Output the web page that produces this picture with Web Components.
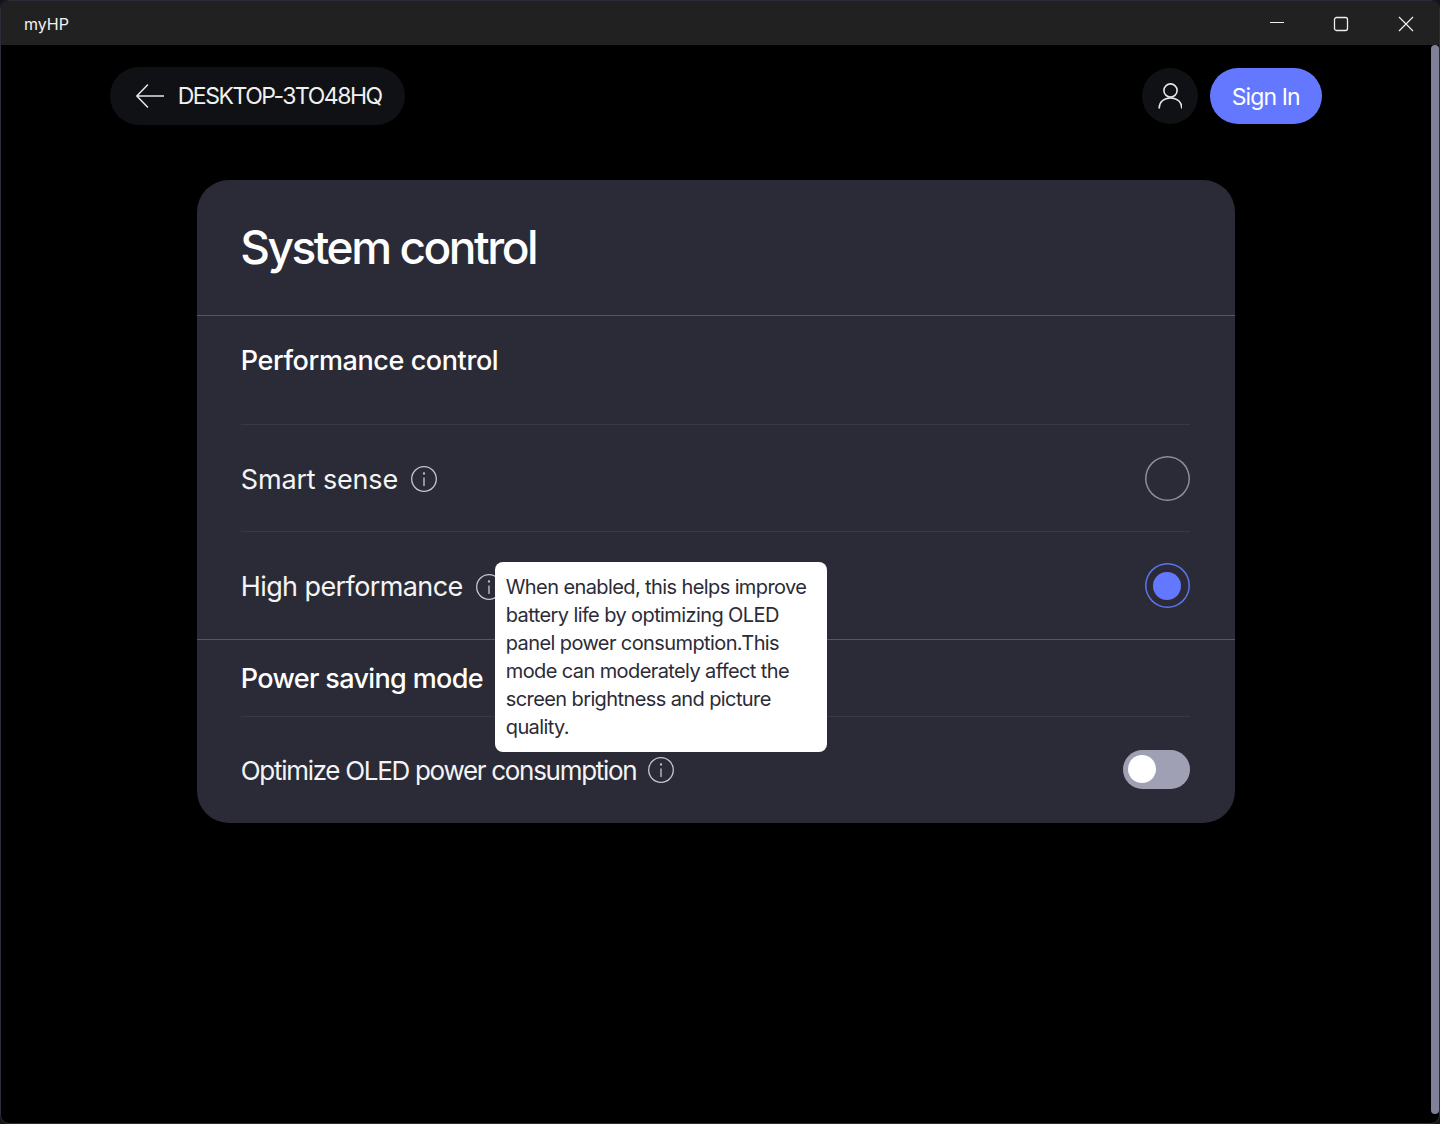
<!DOCTYPE html>
<html lang="en">
<head>
<meta charset="utf-8">
<title>myHP</title>
<style>
  html, body { margin: 0; height: 100%; background: #14141c; }
  body { font-family: Inter, "Liberation Sans", sans-serif; color: #fff; }
</style>
</head>
<body>
<hp-window>
  <hp-titlebar slot="title" label="myHP"></hp-titlebar>
  <hp-toolbar label="DESKTOP-3TO48HQ"></hp-toolbar>
  <hp-card heading="System control">
    <hp-section heading="Performance control" style="--track:-0.4px">
      <hp-option label="Smart sense" style="--track:-0.17px"><hp-radio slot="control"></hp-radio></hp-option>
      <hp-option label="High performance" style="--track:-0.6px">
        <hp-tooltip slot="extra">When enabled, this helps improve<br>battery life by optimizing OLED<br>panel power consumption.This<br>mode can moderately affect the<br>screen brightness and picture<br>quality.</hp-tooltip>
        <hp-radio slot="control" checked></hp-radio>
      </hp-option>
    </hp-section>
    <hp-section heading="Power saving mode" compact style="--track:-0.65px">
      <hp-option label="Optimize OLED power consumption" last style="--track:-1.3px"><hp-toggle slot="control"></hp-toggle></hp-option>
    </hp-section>
  </hp-card>
</hp-window>

<script>
class HpWindow extends HTMLElement {
  constructor() {
    super();
    this.attachShadow({ mode: 'open' });
    this.shadowRoot.innerHTML = `
      <style>
        :host {
          display: flex;
          flex-direction: column;
          box-sizing: border-box;
          height: 1124px;
          border: 1px solid #2c2c36;
          border-radius: 9px;
          background: #000;
          overflow: hidden;
        }
        .body { flex: 1; display: flex; min-height: 0; }
        .content { flex: 1; min-width: 0; display: flex; flex-direction: column; align-items: center; }
        .scrollbar {
          width: 8.5px;
          margin-bottom: 9px;
          background: #80809a;
          border-radius: 4px;
        }
      </style>
      <slot name="title"></slot>
      <div class="body">
        <div class="content"><slot></slot></div>
        <div class="scrollbar"></div>
      </div>
    `;
  }
}

class HpTitlebar extends HTMLElement {
  constructor() {
    super();
    this.attachShadow({ mode: 'open' });
    this.shadowRoot.innerHTML = `
      <style>
        :host {
          display: flex;
          align-items: center;
          justify-content: space-between;
          height: 44px;
          padding-left: 23px;
          padding-right: 1px;
          background: #212121;
          font-size: 16px;
          color: #f2f2f2;
        }
        .label { padding-top: 2px; }
        .controls { display: flex; height: 100%; }
        .controls span { width: 64.5px; display: flex; align-items: center; justify-content: center; padding-top: 1px; box-sizing: border-box; }
        svg { display: block; stroke: #eee; fill: none; }
      </style>
      <span class="label"></span>
      <div class="controls">
        <span><svg width="16" height="16" viewBox="0 0 16 16" stroke-width="1.2"><path d="M1 6.5h14"/></svg></span>
        <span><svg width="16" height="16" viewBox="0 0 16 16" stroke-width="1.3"><rect x="1.5" y="1.5" width="13" height="13" rx="2"/></svg></span>
        <span><svg width="16" height="16" viewBox="0 0 16 16" stroke-width="1.2"><path d="M1 1l14 14M15 1L1 15"/></svg></span>
      </div>
    `;
    this.shadowRoot.querySelector('.label').textContent = this.getAttribute('label');
  }
}

class HpToolbar extends HTMLElement {
  constructor() {
    super();
    this.attachShadow({ mode: 'open' });
    this.shadowRoot.innerHTML = `
      <style>
        :host {
          display: flex;
          align-items: center;
          justify-content: space-between;
          box-sizing: border-box;
          width: 1212px;
          margin: 22px 0 55px;
        }
        .back {
          display: flex;
          align-items: center;
          gap: 14px;
          height: 58px;
          padding: 0 23px 0 26px;
          border-radius: 29px;
          background: #101114;
          font-size: 23px;
          letter-spacing: -1.48px;
          color: #f0f0f0;
        }
        .right { display: flex; align-items: center; gap: 12px; }
        .avatar {
          width: 56px;
          height: 56px;
          border-radius: 50%;
          background: #101114;
          display: flex;
          align-items: center;
          justify-content: center;
        }
        .signin {
          height: 56px;
          width: 112px;
          padding-top: 1px;
          box-sizing: border-box;
          border-radius: 28px;
          background: #6478ff;
          display: flex;
          align-items: center;
          justify-content: center;
          font-size: 23px;
          letter-spacing: -0.9px;
          color: #fff;
        }
        svg { display: block; fill: none; stroke: #e4e4e4; stroke-width: 1.6; stroke-linecap: round; stroke-linejoin: round; }
      </style>
      <div class="back">
        <svg width="28" height="24" viewBox="0 0 28 24"><path d="M27.5 12H.8M11.5 1 .8 12l10.7 11"/></svg>
        <span class="label"></span>
      </div>
      <div class="right">
        <div class="avatar">
          <svg width="24" height="28" viewBox="0 0 24 28"><circle cx="12.500" cy="8.500" r="6.600"/><path d="M1.200 26c0-6 4.600-10 11.300-10s11.300 4 11.300 10"/></svg>
        </div>
        <div class="signin">Sign In</div>
      </div>
    `;
    this.shadowRoot.querySelector('.label').textContent = this.getAttribute('label');
  }
}

class HpCard extends HTMLElement {
  constructor() {
    super();
    this.attachShadow({ mode: 'open' });
    this.shadowRoot.innerHTML = `
      <style>
        :host {
          display: block;
          box-sizing: border-box;
          width: 1038px;
          border-radius: 32px;
          background: #2b2b37;
        }
        header {
          height: 136px;
          padding: 0 0 2px 43.5px;
          display: flex;
          align-items: center;
          box-sizing: border-box;
          border-bottom: 1px solid #565663;
          font-size: 46px;
          font-weight: 500;
          letter-spacing: -2.45px;
          color: #fff;
        }
      </style>
      <header></header>
      <slot></slot>
    `;
    this.shadowRoot.querySelector('header').textContent = this.getAttribute('heading');
  }
}

class HpSection extends HTMLElement {
  constructor() {
    super();
    this.attachShadow({ mode: 'open' });
    this.shadowRoot.innerHTML = `
      <style>
        :host {
          display: block;
          padding: 0 45px 0 44px;
          border-bottom: 1px solid #565663;
        }
        :host(:last-child) { border-bottom: 0; }
        .title {
          box-sizing: border-box;
          height: 109px;
          padding-top: 27px;
          border-bottom: 1px solid #393945;
          font-size: 27px;
          line-height: 36px;
          font-weight: 500;
          letter-spacing: var(--track, 0);
          color: #fff;
        }
        :host([compact]) .title { height: 77px; padding-top: 21px; }
      </style>
      <div class="title"></div>
      <slot></slot>
    `;
    this.shadowRoot.querySelector('.title').textContent = this.getAttribute('heading');
  }
}

class HpOption extends HTMLElement {
  constructor() {
    super();
    this.attachShadow({ mode: 'open' });
    this.shadowRoot.innerHTML = `
      <style>
        :host {
          display: flex;
          align-items: center;
          position: relative;
          box-sizing: border-box;
          height: 107px;
          border-bottom: 1px solid #393945;
          font-size: 27px;
          color: #f4f4f4;
        }
        :host(:last-child) { border-bottom: 0; }
        :host([last]) { height: 106px; font-size: 26px; }
        .name { display: flex; align-items: center; gap: 13px; flex: 1; position: relative; padding-top: 2px; }
        :host([last]) .name { padding-top: 0; gap: 12px; }
        .label { letter-spacing: var(--track, 0); }
        svg { display: block; fill: none; stroke: #c6c6cc; stroke-width: 1.3; }
      </style>
      <div class="name">
        <span class="label"></span>
        <svg width="26" height="26" viewBox="0 0 26 26"><circle cx="13" cy="13" r="12.300"/><path d="M13 11.500v8.500"/><circle cx="13" cy="7.500" r="0.500"/></svg>
        <slot name="extra"></slot>
      </div>
      <slot name="control"></slot>
    `;
    this.shadowRoot.querySelector('.label').textContent = this.getAttribute('label');
  }
}

class HpRadio extends HTMLElement {
  constructor() {
    super();
    this.attachShadow({ mode: 'open' });
    this.shadowRoot.innerHTML = `
      <style>
        :host {
          display: flex;
          align-items: center;
          justify-content: center;
          box-sizing: border-box;
          width: 45px;
          height: 45px;
          box-shadow: inset 0 0 0 1.5px #8e8e98;
          border-radius: 50%;
        }
        :host([checked]) { box-shadow: inset 0 0 0 1.5px #5f72f0; }
        .dot { display: none; width: 28px; height: 28px; border-radius: 50%; background: #6478ff; }
        :host([checked]) .dot { display: block; }
      </style>
      <div class="dot"></div>
    `;
  }
}

class HpToggle extends HTMLElement {
  constructor() {
    super();
    this.attachShadow({ mode: 'open' });
    this.shadowRoot.innerHTML = `
      <style>
        :host {
          display: flex;
          align-items: center;
          box-sizing: border-box;
          width: 67px;
          height: 39px;
          margin-bottom: 2px;
          padding-left: 5.5px;
          border-radius: 20px;
          background: #a0a0b4;
        }
        .knob { width: 28px; height: 28px; border-radius: 50%; background: #fff; }
      </style>
      <div class="knob"></div>
    `;
  }
}

class HpTooltip extends HTMLElement {
  constructor() {
    super();
    this.attachShadow({ mode: 'open' });
    this.shadowRoot.innerHTML = `
      <style>
        :host {
          position: absolute;
          left: 254px;
          top: -6px;
          z-index: 5;
          box-sizing: border-box;
          width: 332px;
          height: 190px;
          padding: 11px 11px;
          border-radius: 8px;
          background: #fff;
          color: #2b2b37;
          font-size: 20px;
          line-height: 28px;
          letter-spacing: -0.6px;
          white-space: nowrap;
        }
      </style>
      <slot></slot>
    `;
  }
}

customElements.define('hp-window', HpWindow);
customElements.define('hp-titlebar', HpTitlebar);
customElements.define('hp-toolbar', HpToolbar);
customElements.define('hp-card', HpCard);
customElements.define('hp-section', HpSection);
customElements.define('hp-option', HpOption);
customElements.define('hp-radio', HpRadio);
customElements.define('hp-toggle', HpToggle);
customElements.define('hp-tooltip', HpTooltip);
</script>
</body>
</html>
